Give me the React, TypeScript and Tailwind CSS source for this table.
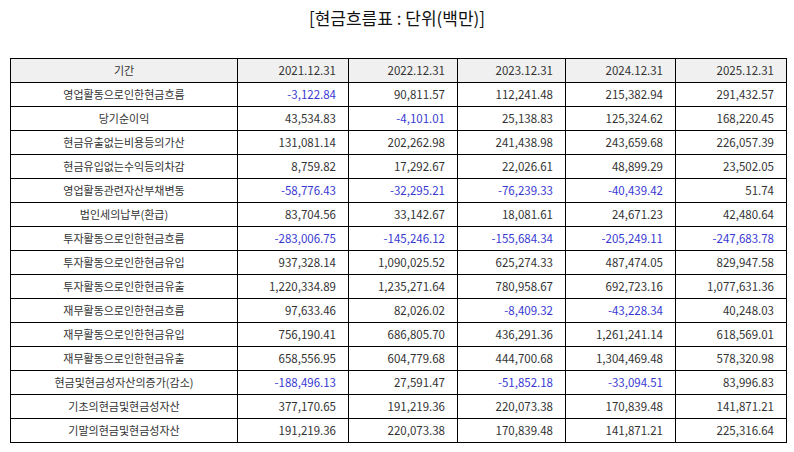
const headers = ["2021.12.31", "2022.12.31", "2023.12.31", "2024.12.31", "2025.12.31"];

const rows: [string, string[]][] = [
  ["영업활동으로인한현금흐름", ["-3,122.84", "90,811.57", "112,241.48", "215,382.94", "291,432.57"]],
  ["당기순이익", ["43,534.83", "-4,101.01", "25,138.83", "125,324.62", "168,220.45"]],
  ["현금유출없는비용등의가산", ["131,081.14", "202,262.98", "241,438.98", "243,659.68", "226,057.39"]],
  ["현금유입없는수익등의차감", ["8,759.82", "17,292.67", "22,026.61", "48,899.29", "23,502.05"]],
  ["영업활동관련자산부채변동", ["-58,776.43", "-32,295.21", "-76,239.33", "-40,439.42", "51.74"]],
  ["법인세의납부(환급)", ["83,704.56", "33,142.67", "18,081.61", "24,671.23", "42,480.64"]],
  ["투자활동으로인한현금흐름", ["-283,006.75", "-145,246.12", "-155,684.34", "-205,249.11", "-247,683.78"]],
  ["투자활동으로인한현금유입", ["937,328.14", "1,090,025.52", "625,274.33", "487,474.05", "829,947.58"]],
  ["투자활동으로인한현금유출", ["1,220,334.89", "1,235,271.64", "780,958.67", "692,723.16", "1,077,631.36"]],
  ["재무활동으로인한현금흐름", ["97,633.46", "82,026.02", "-8,409.32", "-43,228.34", "40,248.03"]],
  ["재무활동으로인한현금유입", ["756,190.41", "686,805.70", "436,291.36", "1,261,241.14", "618,569.01"]],
  ["재무활동으로인한현금유출", ["658,556.95", "604,779.68", "444,700.68", "1,304,469.48", "578,320.98"]],
  ["현금및현금성자산의증가(감소)", ["-188,496.13", "27,591.47", "-51,852.18", "-33,094.51", "83,996.83"]],
  ["기초의현금및현금성자산", ["377,170.65", "191,219.36", "220,073.38", "170,839.48", "141,871.21"]],
  ["기말의현금및현금성자산", ["191,219.36", "220,073.38", "170,839.48", "141,871.21", "225,316.64"]],
];

const colWidths = ["w-[227px]", "w-[111px]", "w-[109px]", "w-[108px]", "w-[110px]", "w-[111px]"];

export default function App() {
  return (
    <div className="w-[794px] h-[452px] bg-white px-[10px] font-['Noto_Sans_CJK_KR','Noto_Sans',sans-serif] text-[#333]">
      <div className="h-[36px] flex items-center justify-center text-[17px] text-[#111]">
        [현금흐름표 : 단위(백만)]
      </div>
      <table className="mt-[22px] border-collapse table-fixed w-[775px]">
        <colgroup>
          {colWidths.map((w, i) => (
            <col key={i} className={w} />
          ))}
        </colgroup>
        <thead>
          <tr className="bg-[#f0f0f0]">
            <th className="h-[24px] p-0 border border-black font-normal text-center text-[11px]">기간</th>
            {headers.map((h) => (
              <th key={h} className="h-[24px] p-0 pr-[12px] border border-black font-normal text-right text-[11.5px]">
                {h}
              </th>
            ))}
          </tr>
        </thead>
        <tbody>
          {rows.map(([label, vals]) => (
            <tr key={label}>
              <td className="h-[24px] p-0 border border-black text-center text-[11px]">{label}</td>
              {vals.map((v, i) => (
                <td
                  key={i}
                  className={`h-[24px] p-0 pr-[12px] border border-black text-right text-[11.5px] ${
                    v.startsWith("-") ? "text-[#3939d2]" : ""
                  }`}
                >
                  {v}
                </td>
              ))}
            </tr>
          ))}
        </tbody>
      </table>
    </div>
  );
}
